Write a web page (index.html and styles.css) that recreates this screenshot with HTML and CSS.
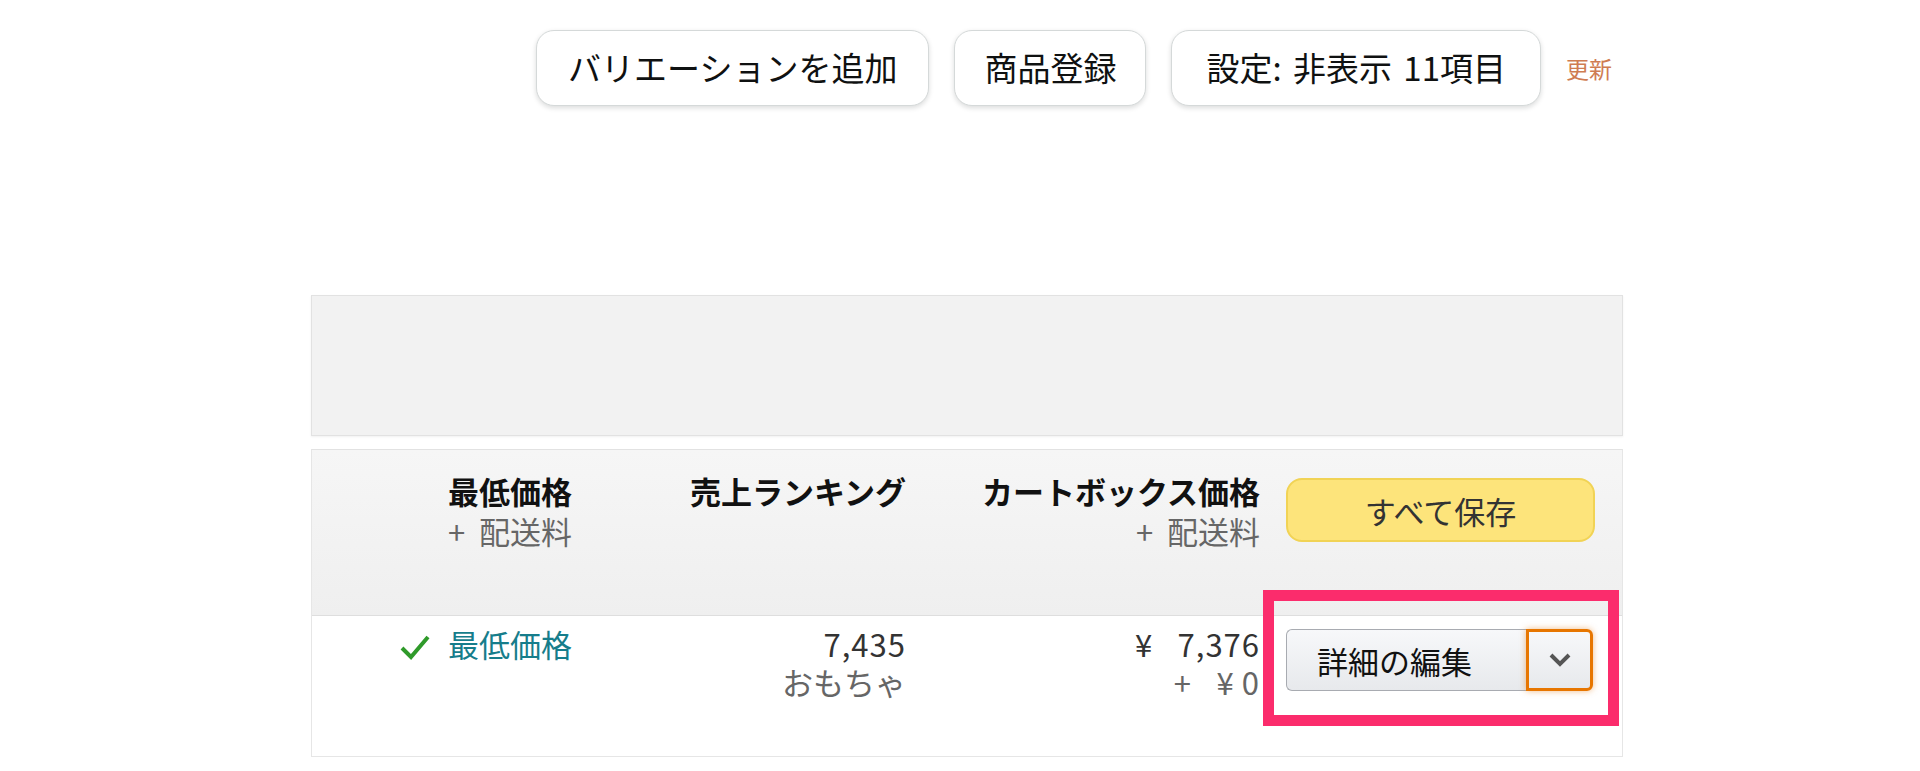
FILE: index.html
```html
<!DOCTYPE html>
<html lang="ja">
<head>
<meta charset="utf-8">
<title>在庫管理</title>
<link rel="stylesheet" href="styles.css">
</head>
<body>
<div class="page">
  <div class="toolbar">
    <button class="pill pill-long">バリエーションを追加</button>
    <button class="pill">商品登録</button>
    <button class="pill pill-wide">設定: 非表示 11項目</button>
    <a class="refresh">更新</a>
  </div>

  <div class="filter-panel"></div>

  <div class="table">
    <div class="thead">
      <div class="th">最低価格<span class="sub">+&nbsp; 配送料</span></div>
      <div class="th">売上ランキング</div>
      <div class="th">カートボックス価格<span class="sub">+&nbsp; 配送料</span></div>
      <div class="th th-action"><button class="save-all">すべて保存</button></div>
    </div>
    <div class="trow">
      <div class="td td-lowest">
        <svg class="check" width="32" height="28" viewBox="0 0 32 28"><polyline points="3,15 12,24 29,4" fill="none" stroke="#2f9a2a" stroke-width="4"/></svg>
        <span class="link">最低価格</span>
      </div>
      <div class="td"><span class="num">7,435</span><span class="muted">おもちゃ</span></div>
      <div class="td"><span class="num">¥&ensp;&nbsp;7,376</span><span class="muted num">+&ensp;&nbsp;¥&thinsp;0</span></div>
      <div class="td td-action">
        <div class="split">
          <button class="split-main">詳細の編集</button>
          <button class="split-drop">
            <svg width="24" height="16" viewBox="0 0 24 16"><polyline points="3,3 12,12 21,3" fill="none" stroke="#555" stroke-width="4"/></svg>
          </button>
        </div>
      </div>
    </div>
    <div class="highlight"></div>
  </div>
</div>
</body>
</html>
```

FILE: styles.css
```css
* { box-sizing: border-box; }

body {
  margin: 0;
  background: #fff;
  font-family: "Noto Sans CJK JP", "Noto Sans", sans-serif;
  color: #111;
}

.page {
  margin-left: 311px;
  width: 1312px;
  padding-top: 29px;
}

.toolbar {
  display: flex;
  justify-content: flex-end;
  align-items: center;
  gap: 25px;
  height: 77px;
  padding-right: 11px;
}

.pill {
  height: 76px;
  padding: 0 29px;
  border: 1px solid #d5d9d9;
  border-radius: 18px;
  background: #fff;
  box-shadow: 0 2px 5px rgba(15, 17, 17, 0.15);
  font-family: inherit;
  font-size: 33px;
  color: #0f1111;
  line-height: 1;
}

.pill-long {
  padding: 0 31px;
}

.pill-wide {
  padding: 0 34px;
  word-spacing: 4px;
}

.refresh {
  font-size: 23px;
  color: #cf7c52;
}

.filter-panel {
  margin-top: 189px;
  height: 141px;
  background: #f2f2f2;
  border: 1px solid #e2e2e2;
  box-shadow: 0 1px 2px rgba(0, 0, 0, 0.06);
}

.table {
  position: relative;
  margin-top: 13px;
  border: 1px solid #e6e6e6;
  border-top-color: #e2e2e2;
}

.thead, .trow {
  display: grid;
  grid-template-columns: 260px 334px 354px 1fr;
}

.thead {
  height: 166px;
  background: linear-gradient(#f6f6f6, #efefef);
  border-bottom: 1px solid #dedede;
}

.th {
  padding-top: 21px;
  text-align: right;
  font-size: 31px;
  font-weight: bold;
  line-height: 40px;
  color: #111;
}

.sub {
  display: block;
  font-weight: normal;
  color: #666;
}

.th-action {
  padding: 28px 27px 0 26px;
}

.save-all {
  width: 100%;
  height: 64px;
  background: #fde47b;
  border: 2px solid #f1d355;
  border-radius: 16px;
  font-family: inherit;
  font-size: 31px;
  color: #333;
}

.trow {
  height: 140px;
  background: #fff;
}

.td {
  padding-top: 9px;
  text-align: right;
  font-size: 31px;
  line-height: 38px;
  color: #333;
}

.num {
  display: block;
  letter-spacing: 1px;
}

.muted {
  display: block;
  color: #666;
}

.td-lowest {
  display: flex;
  justify-content: flex-end;
  align-items: flex-start;
  gap: 17px;
}

.check {
  margin-top: 8px;
}

.link {
  color: #167d8b;
}

.td-action {
  padding: 13px 28px 0 26px;
  text-align: left;
}

.split {
  display: flex;
  height: 62px;
}

.split-main {
  width: 240px;
  padding: 0 0 0 30px;
  text-align: left;
  background: linear-gradient(#f7f8fa, #e7e9ec);
  border: 1px solid #a8abb1;
  border-right: none;
  border-radius: 6px 0 0 6px;
  font-family: inherit;
  font-size: 31px;
  color: #111;
}

.split-drop {
  width: 67px;
  display: flex;
  align-items: center;
  justify-content: center;
  background: linear-gradient(#f7f8fa, #e7e9ec);
  border: 3px solid #e77600;
  border-radius: 0 6px 6px 0;
  box-shadow: 0 0 6px rgba(228, 121, 17, 0.5);
}

.highlight {
  position: absolute;
  left: 951px;
  top: 140px;
  width: 356px;
  height: 136px;
  border: 11px solid #fb2c6c;
  pointer-events: none;
}
```
